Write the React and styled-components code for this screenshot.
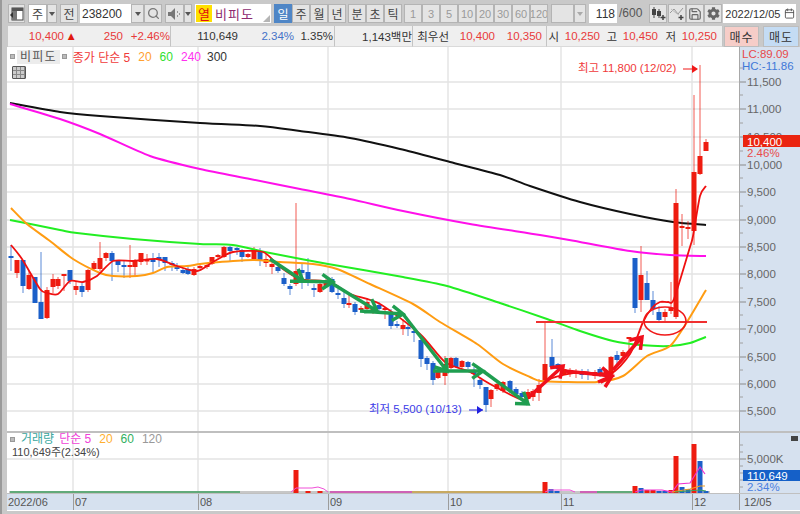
import React from "react";
import styled, { createGlobalStyle } from "styled-components";
import { Search, Save, Calendar } from "lucide-react";
import { FaCog } from "react-icons/fa";

const FONT = `"Liberation Sans", "Noto Sans CJK KR", sans-serif`;

const Global = createGlobalStyle`
  html, body { margin: 0; padding: 0; background: #c9c9c9; }
  * { box-sizing: border-box; }
  body { font-family: ${FONT}; font-size: 12px; color: #333; overflow: hidden; }
`;

const Page = styled.div`
  width: 800px;
  height: 514px;
  background: #c9c9c9;
  display: flex;
  flex-direction: column;
  border-left: 2px solid #9a9a9a;
  overflow: hidden;
`;

const Toolbar = styled.div`
  height: 26px;
  padding: 4px 0 0 6px;
  display: flex;
  align-items: flex-start;
`;

const Button = styled.div`
  flex: none;
  width: ${(p) => p.$w}px;
  margin-left: ${(p) => p.$ml || 0}px;
  height: 19px;
  display: flex;
  align-items: center;
  justify-content: center;
  background: ${(p) => p.$bg || "#e4e4e4"};
  color: ${(p) => p.$color || "#444"};
  border: 1px solid ${(p) => p.$line || "#b4b4b4"};
  font-size: ${(p) => p.$fs || 12}px;
  overflow: hidden;
  white-space: nowrap;
`;

const Field = styled.div`
  flex: none;
  width: ${(p) => p.$w}px;
  margin-left: ${(p) => p.$ml || 0}px;
  height: 19px;
  display: flex;
  align-items: center;
  justify-content: ${(p) => (p.$right ? "flex-end" : "flex-start")};
  padding: 0 2px;
  background: #fff;
  font-size: ${(p) => p.$fs || 12}px;
  color: #333;
  overflow: hidden;
  white-space: nowrap;
`;

const Caret = styled.span`
  width: 0;
  height: 0;
  border-left: 3.5px solid transparent;
  border-right: 3.5px solid transparent;
  border-top: 4px solid ${(p) => p.$c || "#555"};
`;

const Name = styled(Field)`
  position: relative;
  padding: 0;
  margin-left: 3px;
  font-size: 13px;
  color: #8d2a6f;
  letter-spacing: 1px;
`;

const YellowTag = styled.span`
  width: 16px;
  height: 17px;
  margin: 0 3px 0 1px;
  background: #ffe000;
  color: #e01010;
  font-size: 13px;
  letter-spacing: 0;
  display: flex;
  align-items: center;
  justify-content: center;
`;

const Grip = styled.span`
  position: absolute;
  right: 1px;
  bottom: 1px;
  width: 0;
  height: 0;
  border-left: 7px solid transparent;
  border-bottom: 7px solid #b5b5b5;
`;

const Plain = styled.span`
  flex: none;
  margin-left: 2px;
  color: #555;
  font-size: 12px;
  line-height: 19px;
`;

const InfoRow = styled.div`
  height: 21px;
  display: flex;
  align-items: stretch;
  padding-left: 6px;
`;

const InfoCell = styled.div`
  flex: none;
  width: ${(p) => p.$w}px;
  display: flex;
  align-items: center;
  background: #efefef;
  border-right: 1px solid #c4c4c4;
  border-bottom: 1px solid #dadada;
  white-space: nowrap;
  font-size: 11.5px;
`;

const Val = styled.span`
  flex: none;
  width: ${(p) => p.$w}px;
  text-align: ${(p) => p.$align || "right"};
  color: ${(p) => p.$c || "#333"};
`;

const TradeBtn = styled.div`
  flex: none;
  width: ${(p) => p.$w}px;
  margin-left: ${(p) => p.$ml}px;
  background: ${(p) => p.$bg};
  border: 1px solid #bdbdbd;
  color: #333;
  letter-spacing: 1px;
  display: flex;
  align-items: center;
  justify-content: center;
  font-size: 12px;
`;

const Frame = styled.div`
  flex: 1;
  margin-left: 5px;
  margin-bottom: 3px;
  display: flex;
  flex-direction: column;
  background: #fff;
`;

const Panel = styled.div`
  display: flex;
  height: ${(p) => p.$h}px;
  flex: none;
  border-bottom: ${(p) => (p.$sep ? "2px solid #bfbfbf" : "none")};
`;

const Plot = styled.div`
  position: relative;
  width: 732px;
  flex: none;
  background: #fff;
  svg { display: block; }
`;

const AxisCol = styled.div`
  position: relative;
  flex: 1;
  background: #d6e1ef;
  border-left: 1px solid #a8a8a8;
  svg { display: block; }
`;

const Legend = styled.div`
  position: absolute;
  left: 3px;
  top: 2px;
  display: flex;
  align-items: center;
  font-size: 12px;
  white-space: nowrap;
  height: 15px;
`;

const Dot = styled.span`
  width: 5px;
  height: 5px;
  background: #bbb;
  border: 1px solid #999;
  flex: none;
`;

const LegendBtn = styled.span`
  margin: 0 2px;
  padding: 0 3px;
  height: 14px;
  line-height: 14px;
  background: #ececec;
  color: #555;
  letter-spacing: 1.2px;
`;

const Tag = styled.span`
  color: ${(p) => p.$c};
  margin-left: ${(p) => p.$ml || 0}px;
`;

const GridIcon = styled.span`
  position: absolute;
  left: 5px;
  top: 19px;
  width: 14px;
  height: 13px;
  border: 1.5px solid #555;
  border-radius: 1px;
  background-color: #ccc;
  background-image:
    repeating-linear-gradient(90deg, transparent 0 3px, #888 3px 4px),
    repeating-linear-gradient(0deg, transparent 0 3px, #888 3px 4px);
`;

const VolLegend = styled.div`
  position: absolute;
  left: 3px;
  top: 0;
  font-size: 12px;
  line-height: 13px;
  white-space: nowrap;
`;

const VolRow = styled.div`
  display: flex;
  align-items: center;
`;

const VolQty = styled.div`
  color: #444;
  font-size: 11px;
  margin-left: 2px;
`;

const AxisNote = styled.div`
  position: absolute;
  left: 2px;
  top: 1px;
  font-size: 11.5px;
  line-height: 12px;
  white-space: nowrap;
`;

const CloseMark = styled.span`
  position: absolute;
  right: 2px;
  top: 3px;
  width: 7px;
  height: 5px;
  background: #444;
`;

const DateAxis = styled.div`
  flex: none;
  height: 17px;
  display: flex;
  background: #d6e1ef;
  border-top: 1px solid #c0c0c0;
`;

const DateCell = styled.div`
  flex: none;
  width: ${(p) => p.$w}px;
  border-left: ${(p) => (p.$first ? "none" : "1px solid #9c9c9c")};
  padding-left: 1px;
  color: #555;
  font-size: 11px;
  line-height: 16px;
  white-space: nowrap;
`;

/* chart data: page coordinates */
const R = "#ee1c10", B = "#1b5fc9";
const candles = [
  [11,B,257,259,246,272],[17,R,261,274,261,279],[23,B,261,287,261,294],[29,R,276,290,272,291],
  [35,B,278,304,278,304],[41,B,303,320,253,320],[47,R,291,319,288,320],[53,R,280,288,275,294],
  [58,R,280,287,278,290],[64,R,275,277,275,292],[70,B,271,282,271,285],[76,R,287,291,283,296],
  [82,B,287,293,283,298],[88,R,271,291,270,293],[94,R,264,270,262,272],[100,R,259,270,243,272],
  [106,R,254,259,253,262],[112,B,254,262,252,282],[118,B,262,266,262,273],[124,B,266,268,262,279],
  [130,R,266,268,246,279],[135,R,262,268,260,278],[141,R,254,263,254,266],[147,R,261,262,255,266],
  [153,B,260,263,254,273],[159,B,258,261,254,268],[165,B,258,264,258,272],[172,B,264,266,262,272],
  [177,B,268,270,264,272],[183,B,271,274,269,275],[188,B,270,275,268,276],[194,R,270,276,268,277],
  [200,R,267,269,265,270],[207,R,266,268,264,270],[212,R,258,265,258,266],[218,R,256,258,255,259],
  [224,R,248,258,247,259],[230,B,248,252,247,262],[237,B,249,251,248,256],[242,B,251,258,250,263],
  [248,R,255,258,254,259],[254,R,252,260,248,261],[260,B,252,261,249,267],[266,R,260,264,254,268],
  [272,R,265,268,262,275],[278,B,268,272,264,274],[284,B,279,285,274,287],[290,B,287,290,285,296],
  [296,R,272,285,204,287],[302,B,271,274,265,290],[308,B,273,280,259,287],[314,B,289,291,285,298],
  [320,R,285,293,283,294],[326,R,283,287,280,289],[332,B,280,293,278,294],[338,B,294,296,290,300],
  [344,B,299,305,290,309],[349,R,304,306,295,309],[355,B,305,313,303,316],[361,R,309,311,307,313],
  [367,R,303,310,299,311],[373,R,310,314,308,315],[379,B,306,310,303,314],[385,R,309,311,308,320],
  [391,B,315,327,310,330],[397,B,325,327,322,329],[403,R,326,330,320,336],[408,B,328,330,324,337],
  [414,B,332,334,330,343],[421,B,341,360,340,368],[427,B,359,365,357,371],[433,B,364,381,362,386],
  [438,R,372,379,370,380],[445,R,365,377,357,386],[451,R,359,369,358,370],[456,B,359,368,358,369],
  [462,R,362,368,361,369],[468,B,363,368,362,370],[474,B,373,375,368,388],[480,B,381,386,379,390],
  [486,B,388,406,388,413],[491,R,391,400,390,408],[497,R,385,390,384,392],[503,R,383,392,382,394],
  [510,B,382,392,381,394],[516,B,390,395,388,397],[522,B,394,398,392,400],[528,R,393,400,390,402],
  [533,R,392,398,390,402],[539,R,386,394,380,402],[545,R,365,383,323,385],[552,B,358,368,340,370],
  [558,B,365,370,364,372],[564,R,370,375,367,376],[570,R,371,374,369,378],[576,R,372,375,370,379],
  [582,B,372,376,370,380],[588,B,373,376,370,381],[595,R,373,377,371,380],[600,B,370,376,368,378],
  [606,R,372,376,370,378],[611,R,358,375,357,378],[617,B,356,361,352,368],[623,R,353,357,351,360],
  [629,R,338,340,338,352],[635,B,259,309,259,314],[641,R,276,301,247,313],[647,B,284,301,272,301],
  [653,B,301,310,292,316],[659,B,313,321,307,322],[665,R,313,318,310,322],[671,R,309,312,283,315],
  [676,R,204,318,190,320],[682,R,227,229,215,247],[688,R,228,230,222,240],[694,R,173,232,96,246],
  [700,R,157,175,66,176],[706,R,143,152,140,152],
];
const lines = [
  ["#111", "10,104 60,113 100,117 200,124 260,127 300,132 350,139 400,150 450,163 500,176 530,187 580,203 630,215 673,223 706,226"],
  ["#ff10ea", "10,105 60,120 100,135 150,157 200,170 250,180 300,190 350,200 403,212 470,225 540,236 580,243 630,252 670,256 706,257"],
  ["#22ee22", "10,221 60,231 77,234 133,240 200,245 233,246 270,254 328,265 403,278 447,287 500,304 547,320 580,332 613,342 640,346 670,347 690,344 706,338"],
  ["#ff9c12", "11,209 27,225 50,242 73,260 100,274 113,277 137,277 153,274 167,268 187,267 200,265 220,263 253,261 280,263 313,265 337,270 370,285 413,305 440,323 477,345 503,365 530,378 540,382 563,383 597,383 623,377 647,357 670,347 687,323 706,291"],
  ["#f01010", "11,246 22,260 40,290 47,294 58,295 70,282 83,283 97,277 113,262 133,262 157,260 177,267 197,272 213,263 233,253 263,253 280,268 300,280 330,283 350,295 380,305 420,335 445,363 470,373 490,385 520,400 530,398 550,380 580,373 610,375 630,355 643,323 652,309 660,303 668,303 674,300 690,248 693,237 700,197 706,187"],
];

/* Catmull-Rom smoothing of the moving-average points */
function smooth(str) {
  const p = str.split(" ").map((s) => s.split(",").map(Number));
  let d = `M${p[0][0]} ${p[0][1]}`;
  for (let i = 0; i < p.length - 1; i++) {
    const a = p[Math.max(i - 1, 0)], b = p[i], c = p[i + 1], e = p[Math.min(i + 2, p.length - 1)];
    const k = 8;
    d += ` C${b[0] + (c[0] - a[0]) / k} ${b[1] + (c[1] - a[1]) / k} ${c[0] - (e[0] - b[0]) / k} ${c[1] - (e[1] - b[1]) / k} ${c[0]} ${c[1]}`;
  }
  return d;
}

const greenArrows = [[270,260,303,282],[297,282,333,283],[333,285,377,312],[360,312,403,315],[403,315,447,372],[433,372,483,372],[483,372,528,405]];
const redArrows = [[530,397,563,367],[565,372,612,377],[598,383,612,377],[613,371,642,338]];
const gridY = [83,110,138,166,193,221,248,275,303,330,358,385,412];
const gridX = [73,198,328,448,561,692];
const ticks = [["11,500",83],["11,000",110],["10,500",138],["10,000",166],["9,500",193],["9,000",221],["8,500",248],["8,000",275],["7,500",303],["7,000",330],["6,500",358],["6,000",385],["5,500",412]];

const volBars = [
  [296,R,471],[320,R,492],[308,R,492],[545,R,483],[551,B,490],[557,B,492],[635,R,487],[641,B,489],[647,R,491],
  [653,R,491],[659,B,492],[665,B,492],[671,R,491],[676,R,457],[682,B,488],[688,B,490],[694,R,445],[700,B,462],[706,B,492],
];

function Arrow({ a, color, w = 3.5 }) {
  const [x1, y1, x2, y2] = a;
  const t = Math.atan2(y2 - y1, x2 - x1);
  const L = 13, s = 0.6;
  const p1 = `${x2 - L * Math.cos(t - s)},${y2 - L * Math.sin(t - s)}`;
  const p2 = `${x2 - L * Math.cos(t + s)},${y2 - L * Math.sin(t + s)}`;
  return (
    <g stroke={color} strokeWidth={w} fill="none" strokeLinejoin="miter" strokeLinecap="butt">
      <line x1={x1} y1={y1} x2={x2} y2={y2} />
      <polyline points={`${p1} ${x2},${y2} ${p2}`} />
    </g>
  );
}

function PriceChart() {
  return (
    <svg width="732" height="384" viewBox="7 48 732 384" fontFamily={FONT}>
      {gridY.map((y) => <line key={y} x1="7" x2="739" y1={y} y2={y} stroke="#e3e3e3" strokeWidth="1.4" />)}
      {gridX.map((x) => <line key={x} x1={x} x2={x} y1="48" y2="432" stroke="#e3e3e3" strokeWidth="1.4" />)}
      {lines.slice(0, 1).map(([c, p]) => <path key={c} d={smooth(p)} fill="none" stroke={c} strokeWidth="2" />)}
      {candles.map(([x, c, t, b, h, l], i) => (
        <g key={i} fill={c} stroke={c}>
          <line x1={x} x2={x} y1={h} y2={l} strokeWidth="0.9" opacity="0.8" />
          <rect x={x - 2.5} y={t} width="5" height={Math.max(b - t, 1.5)} stroke="none" />
        </g>
      ))}
      {lines.slice(1, 4).map(([c, p]) => <path key={c} d={smooth(p)} fill="none" stroke={c} strokeWidth="2" />)}
      <path d={smooth(lines[4][1])} fill="none" stroke={lines[4][0]} strokeWidth="1.8" />
      <line x1="536" x2="707" y1="323" y2="323" stroke="#f03030" strokeWidth="2" />
      <ellipse cx="665" cy="322" rx="21" ry="14" fill="none" stroke="#f01818" strokeWidth="1.6" />
      {greenArrows.map((a, i) => <Arrow key={i} a={a} color="#1f9e50" />)}
      {redArrows.map((a, i) => <Arrow key={i} a={a} color="#f0101c" />)}
      <text x="578" y="73" fill="#f03a3a" fontSize="11.5">최고 11,800 (12/02)</text>
      <line x1="683" x2="697" y1="70" y2="70" stroke="#f01818" strokeWidth="1" />
      <polygon points="692,66 698,70 692,74" fill="#f01818" />
      <text x="369" y="414" fill="#3c3ce8" fontSize="11.5">최저 5,500 (10/13)</text>
      <line x1="469" x2="483" y1="411" y2="411" stroke="#2020e0" strokeWidth="1" />
      <polygon points="477,407 483,411 477,415" fill="#2020e0" />
    </svg>
  );
}

function PriceAxis() {
  return (
    <svg width="60" height="384" viewBox="740 48 60 384" fontFamily={FONT}>
      {ticks.map(([t, y]) => (
        <g key={t}>
          <line x1="740" x2="746" y1={y} y2={y} stroke="#8a8a8a" />
          <text x="747" y={y + 4} fontSize="11.5" fill="#666">{t}</text>
        </g>
      ))}
      {[69, 96, 124, 152, 179, 207, 234, 261, 289, 316, 344, 371, 398].map((y) => (
        <line key={y} x1="740" x2="743" y1={y} y2={y} stroke="#a0a0a0" />
      ))}
      <rect x="743" y="136" width="57" height="12" fill="#ea2410" />
      <text x="747" y="146.500" fontSize="11.5" fill="#fff">10,400</text>
      <text x="747" y="158" fontSize="11.5" fill="#e84a4a">2.46%</text>
    </svg>
  );
}

function VolumeChart() {
  return (
    <svg width="732" height="60" viewBox="7 434 732 60">
      <line x1="7" x2="739" y1="460" y2="460" stroke="#e3e3e3" strokeWidth="1.4" />
      {gridX.map((x) => <line key={x} x1={x} x2={x} y1="434" y2="494" stroke="#e3e3e3" strokeWidth="1.4" />)}
      <line x1="9" x2="710" y1="493" y2="493" stroke="#b5b5b5" strokeWidth="1.5" />
      <line x1="10" x2="240" y1="493" y2="493" stroke="#3fa060" strokeWidth="1.5" />
      <line x1="330" x2="412" y1="493" y2="493" stroke="#d040b0" strokeWidth="1.5" />
      <line x1="412" x2="545" y1="493" y2="493" stroke="#c8a040" strokeWidth="1.5" />
      <line x1="580" x2="597" y1="493" y2="493" stroke="#d040b0" strokeWidth="1.5" />
      <line x1="597" x2="632" y1="493" y2="493" stroke="#3fa060" strokeWidth="1.5" />
      {volBars.map(([x, c, y], i) => <rect key={i} x={x - 2.5} y={y} width="5" height={494 - y} fill={c} />)}
      <polyline points="291,493 296,489 312,489 318,488 324,490 328,493" fill="none" stroke="#f050d8" strokeWidth="1" />
      <polyline points="545,493 550,491 570,491 575,493" fill="none" stroke="#f050d8" strokeWidth="1" />
      <polyline points="635,493 642,491 662,491 672,493 678,485 690,484 700,468 705,475" fill="none" stroke="#f030d0" strokeWidth="1.2" />
      <polyline points="672,493 690,490 700,487 705,487" fill="none" stroke="#f0a020" strokeWidth="1.2" />
      <polyline points="675,493 700,491 706,492" fill="none" stroke="#3fa060" strokeWidth="1.2" />
    </svg>
  );
}

function VolumeAxis() {
  return (
    <svg width="60" height="60" viewBox="740 434 60 60" fontFamily={FONT}>
      {[446, 453, 467, 474, 481, 488].map((y) => <line key={y} x1="740" x2="743" y1={y} y2={y} stroke="#a0a0a0" />)}
      <line x1="740" x2="746" y1="460" y2="460" stroke="#8a8a8a" />
      <text x="747" y="464" fontSize="11.5" fill="#666">5,000K</text>
      <rect x="743" y="471" width="57" height="11" fill="#1560c8" />
      <text x="747" y="481" fontSize="11.5" fill="#fff">110,649</text>
      <text x="747" y="492" fontSize="11.5" fill="#4a80e0">2.34%</text>
    </svg>
  );
}

const PanelGlyph = () => (
  <svg width="14" height="14" viewBox="0 0 14 14">
    <rect x="2" y="1" width="11" height="12" fill="#fff" stroke="#444" />
    <rect x="2" y="1" width="11" height="3" fill="#555" />
    <rect x="2" y="4" width="5" height="9" fill="#777" />
    <path d="M0 8l3-3v6z" fill="#333" />
  </svg>
);
const Speaker = () => (
  <svg width="15" height="14" viewBox="0 0 15 14">
    <path d="M1 5h3l4-4v12l-4-4H1z" fill="#777" />
    <path d="M10 4h1v2h-1zM12 6h1v2h-1zM10 8h1v2h-1z" fill="#999" />
  </svg>
);
const CandleAdd = () => (
  <svg width="16" height="15" viewBox="0 0 16 15">
    <path d="M4 1v11M9 3v9" stroke="#444" />
    <rect x="2" y="3" width="4" height="6" fill="#444" />
    <rect x="7" y="5" width="4" height="5" fill="#444" />
    <path d="M13 9v5M10.500 11.500h5" stroke="#444" strokeWidth="1.5" />
  </svg>
);
const LineAdd = () => (
  <svg width="16" height="15" viewBox="0 0 16 15" fill="none">
    <path d="M1 7l4-4 4 5 5-6" stroke="#999" />
    <path d="M2 3l5 4 3 2" stroke="#bbb" />
    <path d="M12 9v5M9.500 11.500h5" stroke="#444" strokeWidth="1.5" />
  </svg>
);

export default function App() {
  return (
    <Page>
      <Global />
      <Toolbar>
        <Button $w={17}><PanelGlyph /></Button>
        <Button $w={19} $ml={3} $bg="#fff">주</Button>
        <Button $w={10}><Caret /></Button>
        <Button $w={18} $ml={3}>전</Button>
        <Field $w={51} $ml={2}>238200</Field>
        <Button $w={13}><Caret /></Button>
        <Button $w={18}><Search size={13} color="#777" strokeWidth={2.4} /></Button>
        <Button $w={19} $ml={3}><Speaker /></Button>
        <Button $w={8}><Caret /></Button>
        <Name $w={76}>
          <YellowTag>열</YellowTag>비피도<Grip />
        </Name>
        <Button $w={18} $ml={3} $bg="#4f86c6" $color="#fff" $line="#4f86c6">일</Button>
        <Button $w={18}>주</Button>
        <Button $w={18}>월</Button>
        <Button $w={18}>년</Button>
        <Button $w={18} $ml={2}>분</Button>
        <Button $w={18}>초</Button>
        <Button $w={18}>틱</Button>
        {["1", "3", "5", "10", "20", "30", "60", "120"].map((t, i) => (
          <Button key={t} $w={18} $ml={i === 0 ? 2 : 0} $color="#9a9a9a" $fs={11}>{t}</Button>
        ))}
        <Button $w={23} $ml={3} />
        <Button $w={12}><Caret $c="#aaa" /></Button>
        <Field $w={28} $ml={3} $right>118</Field>
        <Plain>/600</Plain>
        <Button $w={18} $ml={7}><CandleAdd /></Button>
        <Button $w={18} $ml={1}><LineAdd /></Button>
        <Button $w={18}><Save size={14} color="#666" /></Button>
        <Button $w={18}><FaCog size={13} color="#666" /></Button>
        <Field $w={60} $ml={1} $fs={11}>2022/12/05</Field>
        <Button $w={13} $bg="#fff" $line="#fff"><Calendar size={11} color="#555" /></Button>
      </Toolbar>
      <InfoRow>
        <InfoCell $w={163}>
          <Val $w={56} $c="#e83a3a">10,400</Val>
          <Val $w={13} $c="#e01a10">▲</Val>
          <Val $w={46} $c="#e83a3a">250</Val>
          <Val $w={47} $c="#e83a3a">+2.46%</Val>
        </InfoCell>
        <InfoCell $w={164}>
          <Val $w={67}>110,649</Val>
          <Val $w={56} $c="#4472c8">2.34%</Val>
          <Val $w={39}>1.35%</Val>
        </InfoCell>
        <InfoCell $w={78}>
          <Val $w={77}>1,143백만</Val>
        </InfoCell>
        <InfoCell $w={134}>
          <Val $w={36}>최우선</Val>
          <Val $w={46} $c="#e83a3a">10,400</Val>
          <Val $w={47} $c="#e83a3a">10,350</Val>
        </InfoCell>
        <InfoCell $w={176}>
          <Val $w={12}>시</Val>
          <Val $w={41} $c="#e83a3a">10,250</Val>
          <Val $w={17}>고</Val>
          <Val $w={41} $c="#e83a3a">10,450</Val>
          <Val $w={18}>저</Val>
          <Val $w={41} $c="#e83a3a">10,250</Val>
        </InfoCell>
        <TradeBtn $w={35} $ml={1} $bg="#f6cdc8">매수</TradeBtn>
        <TradeBtn $w={36} $ml={4} $bg="#c4dcf4">매도</TradeBtn>
      </InfoRow>
      <Frame>
        <Panel $h={386} $sep>
          <Plot>
            <PriceChart />
            <Legend>
              <Dot />
              <LegendBtn>비피도</LegendBtn>
              <Dot />
              <Tag $c="#f03a3a" $ml={6}>종가 단순 5</Tag>
              <Tag $c="#ffa030" $ml={8}>20</Tag>
              <Tag $c="#30e030" $ml={8}>60</Tag>
              <Tag $c="#ff30f0" $ml={8}>240</Tag>
              <Tag $c="#333" $ml={6}>300</Tag>
            </Legend>
            <GridIcon />
          </Plot>
          <AxisCol>
            <PriceAxis />
            <AxisNote>
              <Tag $c="#e84a4a">LC:89.09</Tag><br />
              <Tag $c="#3f78d8">HC:-11.86</Tag>
            </AxisNote>
          </AxisCol>
        </Panel>
        <Panel $h={60}>
          <Plot>
            <VolumeChart />
            <VolLegend>
              <VolRow>
                <Dot />
                <Tag $c="#3aa8a0" $ml={6}>거래량</Tag>
                <Tag $c="#f040d8" $ml={5}>단순 5</Tag>
                <Tag $c="#ffb030" $ml={8}>20</Tag>
                <Tag $c="#30b060" $ml={8}>60</Tag>
                <Tag $c="#999" $ml={8}>120</Tag>
              </VolRow>
              <VolQty>110,649주(2.34%)</VolQty>
            </VolLegend>
          </Plot>
          <AxisCol>
            <VolumeAxis />
            <CloseMark />
          </AxisCol>
        </Panel>
        <DateAxis>
          <DateCell $w={66} $first>2022/06</DateCell>
          <DateCell $w={125}>07</DateCell>
          <DateCell $w={130}>08</DateCell>
          <DateCell $w={120}>09</DateCell>
          <DateCell $w={113}>10</DateCell>
          <DateCell $w={131}>11</DateCell>
          <DateCell $w={47}>12</DateCell>
          <DateCell $w={60}>&nbsp;12/05</DateCell>
        </DateAxis>
      </Frame>
    </Page>
  );
}
